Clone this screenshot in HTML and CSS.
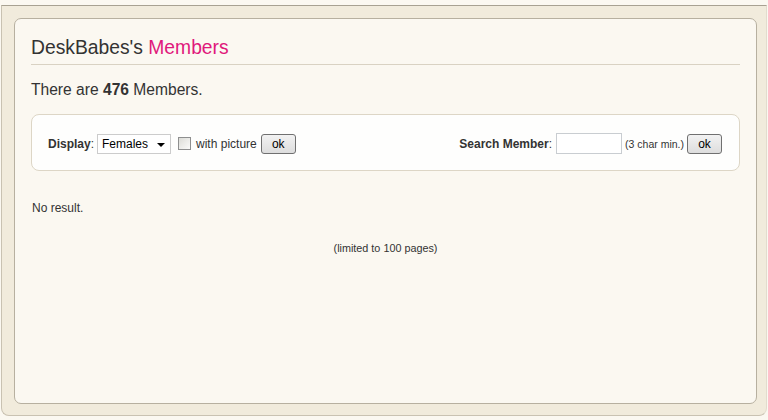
FILE: index.html
```html
<!DOCTYPE html>
<html>
<head>
<meta charset="utf-8">
<link rel="stylesheet" href="styles.css">
</head>
<body>
<div class="outer">
  <div class="panel">
    <h1 class="title">DeskBabes's <span class="pink">Members</span></h1>
    <p class="count">There are <b>476</b> Members.</p>
    <div class="filter">
      <div class="left">
        <span class="lbl"><b>Display</b>:</span>
        <span class="select">Females<span class="arrow"></span></span>
        <span class="check"></span>
        <span class="txt">with picture</span>
        <span class="btn">ok</span>
      </div>
      <div class="right">
        <span class="lbl"><b>Search Member</b>:</span>
        <span class="input"></span>
        <span class="small">(3 char min.)</span>
        <span class="btn">ok</span>
      </div>
    </div>
    <p class="noresult">No result.</p>
    <p class="limited">(limited to 100 pages)</p>
  </div>
</div>
</body>
</html>
```
FILE: styles.css
```css
html, body { margin: 0; padding: 0; }
body {
  background: #fbf8f1;
  font-family: "Liberation Sans", Arial, sans-serif;
  color: #333;
  width: 768px;
  height: 420px;
  overflow: hidden;
  padding-top: 5px;
  box-sizing: border-box;
}
.outer {
  background: #f1ebdc;
  border-top: 1px solid #a8a192;
  border-left: 1px solid #c9c2b2;
  border-bottom: 1px solid #c9c2b2;
  border-right: 1px solid #e2dccd;
  border-radius: 0 0 8px 8px;
  margin-left: 1px;
  width: 766px;
  height: 411px;
  box-sizing: border-box;
  padding: 12px 9px 0 12px;
}
.panel {
  background: #fbf8f1;
  border: 1px solid #b7b0a0;
  border-radius: 7px;
  height: 386px;
  box-sizing: border-box;
  padding: 0 16px;
}
.title {
  margin: 18px 0 0;
  font-size: 19.3px;
  font-weight: normal;
  color: #333;
  line-height: 22px;
  padding-bottom: 5px;
  border-bottom: 1px solid #d9d2c3;
}
.pink { color: #e0187c; }
.count {
  margin: 15px 0 0;
  font-size: 15.6px;
  line-height: 20px;
  color: #333;
}
.filter {
  margin-top: 14px;
  height: 57px;
  box-sizing: border-box;
  border: 1px solid #ddd6c6;
  border-radius: 8px;
  background: #fefefd;
  display: flex;
  align-items: center;
  justify-content: space-between;
  padding: 2px 17px 0 16px;
  font-size: 12px;
}
.left, .right { display: flex; align-items: center; }
.lbl { color: #333; }
.select {
  margin-left: 3px;
  width: 74px;
  height: 20px;
  box-sizing: border-box;
  border: 1px solid #ccc;
  background: #fff;
  display: flex;
  align-items: center;
  padding-left: 4px;
  font-size: 12px;
  position: relative;
  color: #000;
}
.arrow {
  position: absolute;
  right: 5px;
  top: 8px;
  border-left: 4px solid transparent;
  border-right: 4px solid transparent;
  border-top: 4px solid #000;
}
.check {
  margin-left: 7px;
  width: 13px;
  height: 13px;
  box-sizing: border-box;
  border: 1px solid #8e8f8f;
  background: linear-gradient(135deg, #dcdcd7, #fbfbfa);
  margin-top: -1px;
}
.txt { margin-left: 5px; }
.btn {
  margin-left: 4px;
  width: 35px;
  height: 20px;
  box-sizing: border-box;
  border: 1px solid #707070;
  border-radius: 3px;
  background: linear-gradient(#f2f2f2, #dddddd);
  display: flex;
  align-items: center;
  justify-content: center;
  color: #000;
  font-size: 12px;
}
.input {
  margin-left: 4px;
  width: 66px;
  height: 21px;
  box-sizing: border-box;
  border: 1px solid #c9cdd1;
  background: #fff;
}
.small { font-size: 10.5px; margin-left: 3px; color: #333; }
.right .btn { margin-left: 3px; }
.noresult {
  margin: 30px 0 0 1px;
  font-size: 12px;
  line-height: 14px;
}
.limited {
  margin: 27px 0 0;
  text-align: center;
  font-size: 10.8px;
  line-height: 13px;
}
```
